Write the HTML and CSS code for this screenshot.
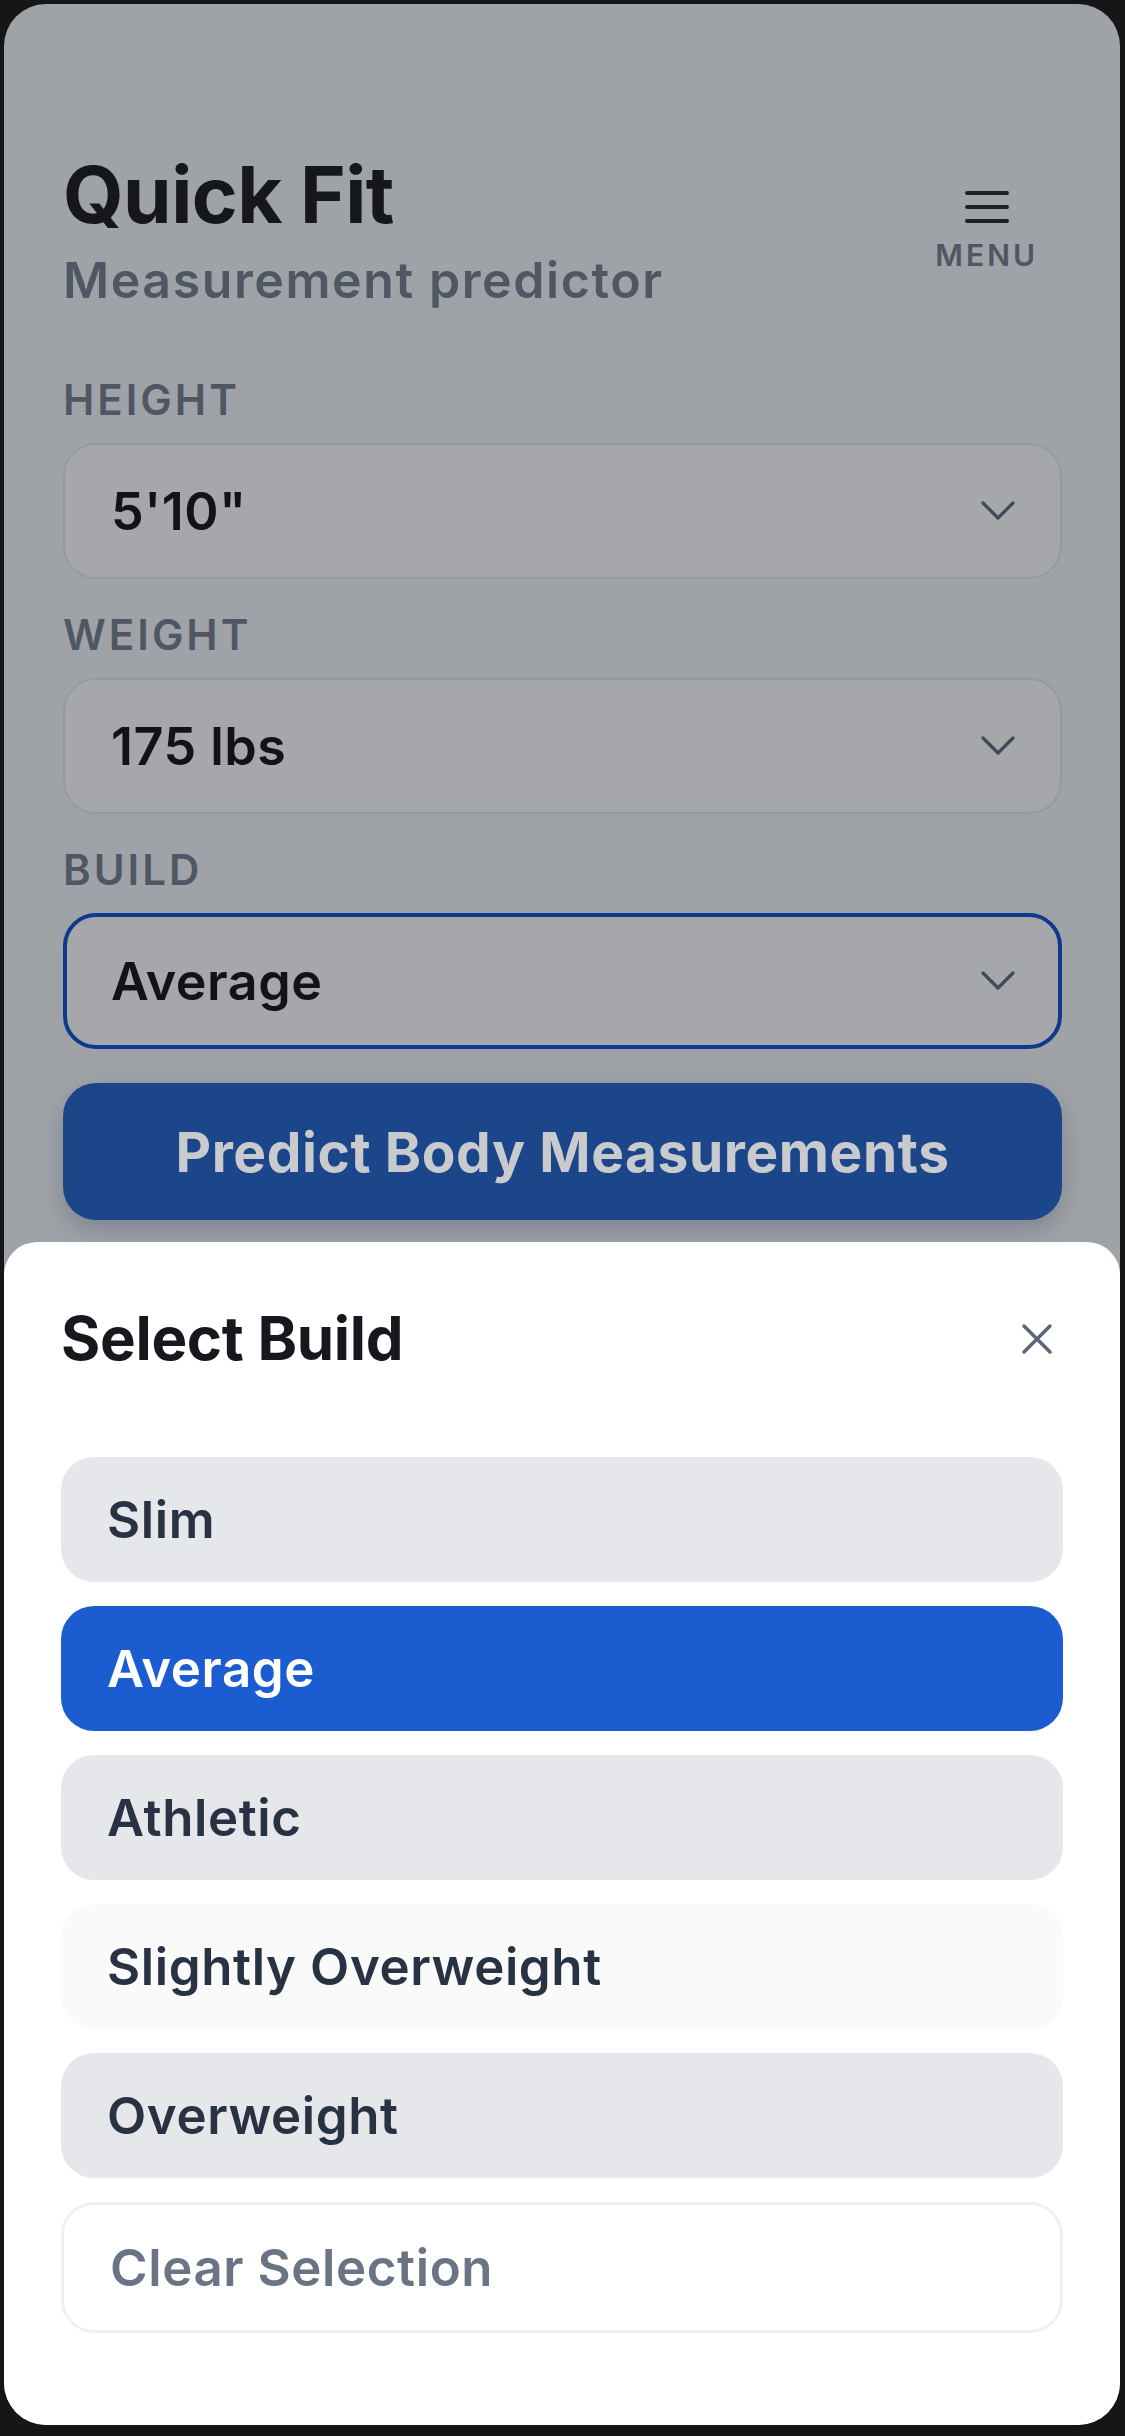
FILE: index.html
```html
<!DOCTYPE html>
<html lang="en">
<head>
<meta charset="utf-8">
<title>Quick Fit</title>
<link rel="stylesheet" href="styles.css">
</head>
<body>
<div class="screen">
  <main class="page">
    <header class="top">
      <div class="brand">
        <h1>Quick Fit</h1>
        <p>Measurement predictor</p>
      </div>
      <button class="menu" type="button">
        <svg class="menu-icon" width="44" height="34" viewBox="0 0 44 34"><path d="M2 3H42M2 17H42M2 31H42" stroke="#1e2128" stroke-width="4" stroke-linecap="round" fill="none"/></svg>
        <span>MENU</span>
      </button>
    </header>
    <form class="form">
      <div class="field">
        <label>HEIGHT</label>
        <div class="select"><span>5'10"</span><svg width="34" height="20" viewBox="0 0 34 20"><path d="M2 2L17 17L32 2" stroke="#414857" stroke-width="3.2" fill="none" stroke-linecap="round" stroke-linejoin="round"/></svg></div>
      </div>
      <div class="field">
        <label>WEIGHT</label>
        <div class="select"><span>175 lbs</span><svg width="34" height="20" viewBox="0 0 34 20"><path d="M2 2L17 17L32 2" stroke="#414857" stroke-width="3.2" fill="none" stroke-linecap="round" stroke-linejoin="round"/></svg></div>
      </div>
      <div class="field">
        <label>BUILD</label>
        <div class="select focused"><span>Average</span><svg width="34" height="20" viewBox="0 0 34 20"><path d="M2 2L17 17L32 2" stroke="#414857" stroke-width="3.2" fill="none" stroke-linecap="round" stroke-linejoin="round"/></svg></div>
      </div>
      <button class="predict" type="button">Predict Body Measurements</button>
    </form>
  </main>
  <section class="sheet">
    <div class="sheet-head">
      <h2>Select Build</h2>
      <button class="close" type="button"><svg width="32" height="32" viewBox="0 0 32 32"><path d="M3 3L29 29M29 3L3 29" stroke="#5d6676" stroke-width="3.5" stroke-linecap="round" fill="none"/></svg></button>
    </div>
    <ul class="options">
      <li class="opt">Slim</li>
      <li class="opt selected">Average</li>
      <li class="opt">Athletic</li>
      <li class="opt hover">Slightly Overweight</li>
      <li class="opt">Overweight</li>
      <li class="opt clear">Clear Selection</li>
    </ul>
  </section>
</div>
</body>
</html>
```
FILE: styles.css
```css
* { box-sizing: border-box; }
html, body {
  margin: 0;
  padding: 0;
  width: 1125px;
  height: 2436px;
  overflow: hidden;
  background: #161616;
  font-family: Inter, "Noto Sans", sans-serif;
}
.screen {
  position: relative;
  width: 1116px;
  height: 2421px;
  margin: 4px 5px 11px 4px;
  border-radius: 42px;
  overflow: hidden;
  background: #9fa2a6;
}
.page {
  padding: 144px 58px 0 59px;
}
.top {
  display: flex;
  justify-content: space-between;
  align-items: center;
}
.brand h1 {
  margin: 0;
  font-size: 78px;
  line-height: 94px;
  font-weight: 700;
  letter-spacing: -0.5px;
  color: #15171c;
}
.brand p {
  margin: 9px 0 0;
  font-size: 50px;
  line-height: 58px;
  font-weight: 600;
  letter-spacing: 1.6px;
  color: #4f5765;
}
.menu {
  display: flex;
  flex-direction: column;
  align-items: center;
  gap: 13px;
  margin-top: 6px;
  padding: 0 24px;
  background: none;
  border: 0;
  font-family: inherit;
}
.menu-icon { display: block; }
.menu span {
  font-size: 30px;
  line-height: 36px;
  font-weight: 600;
  letter-spacing: 3px;
  color: #4f5765;
}
.form {
  margin-top: 66px;
  display: flex;
  flex-direction: column;
  gap: 31px;
}
.field label {
  display: block;
  font-size: 42px;
  line-height: 50px;
  font-weight: 600;
  letter-spacing: 3px;
  color: #4f5765;
  margin-bottom: 18px;
}
.select {
  height: 136px;
  display: flex;
  align-items: center;
  justify-content: space-between;
  padding: 0 45px 0 46px;
  background: #a6a7ab;
  border: 2px solid #959aa1;
  border-radius: 33px;
  font-size: 52px;
  font-weight: 600;
  letter-spacing: 0.5px;
  color: #111317;
}
.select.focused {
  border: 4px solid #0e3a8e;
  padding: 0 43px 0 44px;
}
.predict {
  margin-top: 3px;
  height: 137px;
  border: 0;
  border-radius: 33px;
  background: #1c468a;
  color: #c9cacd;
  font-family: inherit;
  font-size: 55px;
  font-weight: 700;
  letter-spacing: 0.6px;
  box-shadow: 0 10px 22px rgba(25, 40, 80, 0.22);
}
.sheet {
  position: absolute;
  left: 0;
  right: 0;
  bottom: 0;
  background: #ffffff;
  border-radius: 33px 33px 0 0;
  padding: 60px 57px 92px 57px;
}
.sheet-head {
  display: flex;
  justify-content: space-between;
  align-items: center;
}
.sheet-head h2 {
  margin: 0;
  font-size: 60px;
  line-height: 73px;
  font-weight: 700;
  letter-spacing: -0.3px;
  color: #16181d;
}
.close {
  display: flex;
  padding: 10px;
  background: none;
  border: 0;
}
.options {
  list-style: none;
  margin: 82px 0 0;
  padding: 0;
  display: flex;
  flex-direction: column;
  gap: 24px;
}
.opt {
  height: 125px;
  display: flex;
  align-items: center;
  padding: 0 46px;
  border-radius: 33px;
  background: #e5e7eb;
  font-size: 51px;
  font-weight: 600;
  letter-spacing: 0.6px;
  color: #283242;
}
.opt.selected {
  background: #1b5dd0;
  color: #ffffff;
}
.opt.hover {
  background: #fafafa;
}
.opt.clear {
  height: 131px;
  background: #ffffff;
  border: 3px solid #eef0f3;
  color: #6b7485;
}
```
